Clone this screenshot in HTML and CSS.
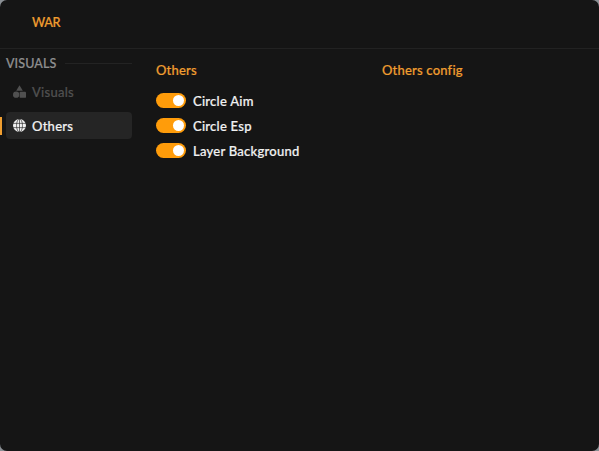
FILE: index.html
```html
<!DOCTYPE html>
<html lang="en">
<head>
<meta charset="utf-8">
<title>WAR</title>
<link rel="stylesheet" href="styles.css">
</head>
<body>
<div class="window">
  <header class="topbar"><span class="brand">WAR</span></header>
  <div class="main">
    <aside class="sidebar">
      <div class="group-head"><span class="group-title">VISUALS</span><span class="group-line"></span></div>
      <div class="nav-item">
        <svg class="nav-icon" viewBox="0 0 14 14"><path fill="currentColor" d="M7 .2 10.6 6.2H3.4z"/><circle cx="3.4" cy="10.4" r="3.4" fill="currentColor"/><rect x="7.2" y="7.2" width="6.8" height="6.6" rx="1" fill="currentColor"/></svg>
        <span>Visuals</span>
      </div>
      <div class="nav-item active">
        <span class="marker"></span>
        <svg class="nav-icon" viewBox="0 0 14 14"><circle cx="7" cy="7" r="7" fill="currentColor"/><g fill="none" stroke="#252525" stroke-width=".7"><ellipse cx="7" cy="7" rx="3.2" ry="7"/><path d="M0 4.7h14M0 9.3h14M7 0v14"/></g></svg>
        <span>Others</span>
      </div>
    </aside>
    <section class="col col-left">
      <h2 class="col-title">Others</h2>
      <div class="toggles">
        <label class="toggle-row"><span class="switch"><span class="knob"></span></span>Circle Aim</label>
        <label class="toggle-row"><span class="switch"><span class="knob"></span></span>Circle Esp</label>
        <label class="toggle-row"><span class="switch"><span class="knob"></span></span>Layer Background</label>
      </div>
    </section>
    <section class="col">
      <h2 class="col-title">Others config</h2>
    </section>
  </div>
</div>
</body>
</html>
```
FILE: styles.css
```css
* { box-sizing: border-box; }
html, body { margin: 0; height: 100%; background: #8a8f94; overflow: hidden; }
body { font-family: "Lato", "Liberation Sans", sans-serif; -webkit-text-stroke: .2px currentColor; }
.window { width: 599px; height: 451px; background: #151515; border-radius: 7px; overflow: hidden; display: flex; flex-direction: column; }
.topbar { height: 49px; border-bottom: 1px solid #222; padding: 13.5px 0 0 32px; flex: none; }
.brand { color: #f09e30; font-size: 12.7px; font-weight: 500; letter-spacing: -.35px; line-height: 16px; display: block; }
.main { flex: 1; display: flex; }
.sidebar { width: 156px; flex: none; padding: 7px 24px 0 6px; }
.group-head { display: flex; align-items: center; gap: 9px; height: 14px; }
.group-title { color: #8f8f8f; font-size: 12.5px; font-weight: 500; letter-spacing: .1px; }
.group-line { flex: 1; height: 1px; background: #232323; }
.nav-item { position: relative; height: 27px; margin-top: 8px; display: flex; align-items: center; gap: 6px; padding-left: 7px; border-radius: 4px; font-size: 13px; font-weight: 500; letter-spacing: .25px; color: #505050; }
.nav-item + .nav-item { margin-top: 7px; }
.nav-item.active { background: #252525; color: #f2f2f2; }
.nav-icon { width: 13px; height: 13px; flex: none; }
.marker { position: absolute; left: -6px; top: 5px; width: 1.5px; height: 18px; background: #f09e30; }
.col { width: 226px; flex: none; padding-top: 13px; }
.col-title { margin: 0; color: #f09e30; font-size: 13px; font-weight: 500; letter-spacing: .2px; line-height: 16px; }
.toggles { margin-top: 15px; display: flex; flex-direction: column; gap: 10px; }
.toggle-row { display: flex; align-items: center; gap: 7px; height: 15px; color: #f2f2f2; font-size: 13px; font-weight: 500; letter-spacing: .25px; }
.switch { width: 30px; height: 15px; border-radius: 8px; background: #ff9c0a; display: flex; align-items: center; justify-content: flex-end; padding-right: 2px; }
.knob { width: 11px; height: 11px; border-radius: 50%; background: #fff; }
```
